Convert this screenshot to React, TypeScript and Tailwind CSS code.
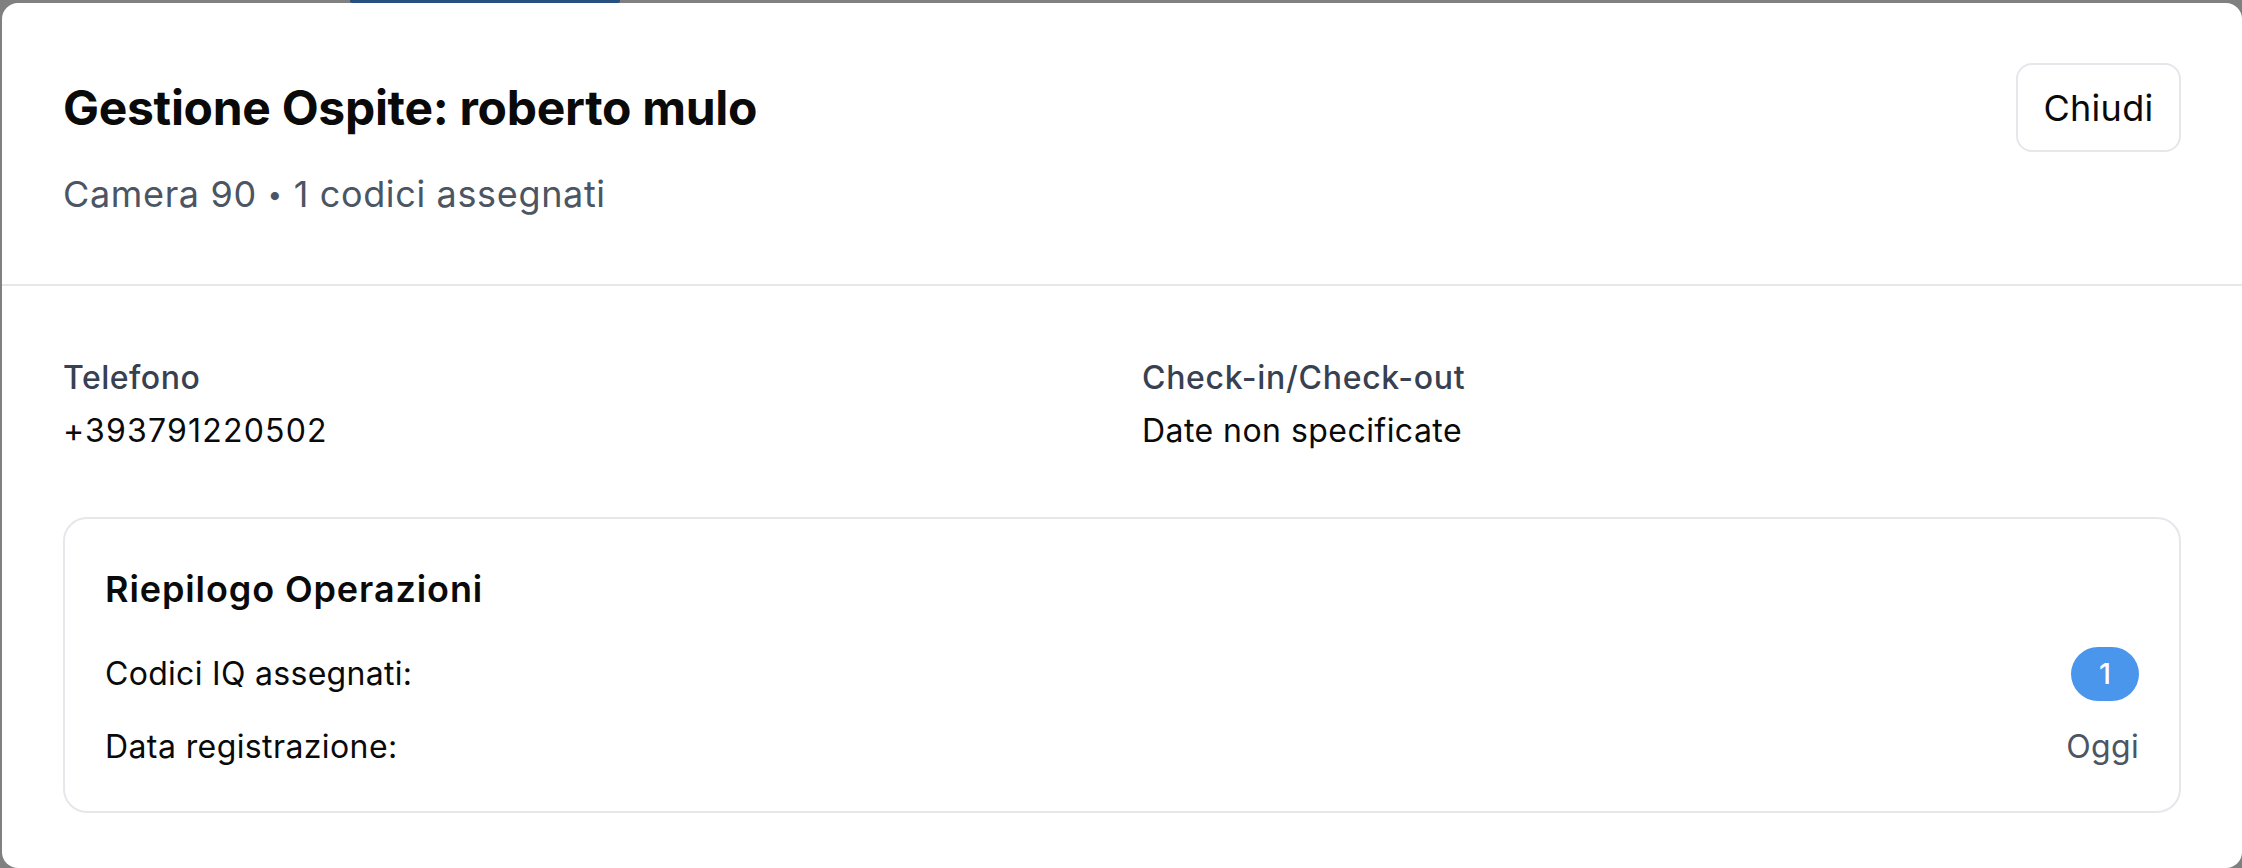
import React from "react";

export default function App() {
  return (
    <div
      className="relative w-[2242px] h-[868px] overflow-hidden bg-[#808080]"
      style={{ fontFamily: "Inter, 'Noto Sans', 'Liberation Sans', sans-serif" }}
    >
      {/* backdrop content peeking */}
      <div className="absolute left-[350px] top-0 h-[3px] w-[270px] rounded-b-[2px] bg-[#274f80]" />

      <div className="ml-[2px] mt-[3px] w-[2240px] h-[865px] rounded-[16px] bg-white flex flex-col">
        {/* Header */}
        <div className="flex items-start justify-between px-[61px] pt-[60px] pb-[61px] border-b-2 border-[#e5e7eb]">
          <div className="flex flex-col">
            <h2 className="text-[48px] leading-[90px] font-bold text-[#0a0a0a] tracking-[-0.3px]">
              Gestione Ospite: roberto mulo
            </h2>
            <p className="mt-[13px] text-[36px] leading-[56px] text-[#4b5563] tracking-[0.65px]">
              Camera 90 <span className="text-[26px] align-[3px]">•</span> 1 codici assegnati
            </p>
          </div>
          <button className="h-[89px] w-[165px] rounded-[16px] border-2 border-[#e5e7eb] bg-white text-[36px] font-normal text-[#0a0a0a] tracking-[0.3px] flex items-center justify-center">
            Chiudi
          </button>
        </div>

        {/* Body */}
        <div className="px-[61px] pt-[68px]">
          <div className="grid grid-cols-2 gap-x-[40px]">
            <div>
              <div className="text-[32px] leading-[48px] font-medium text-[#374151] tracking-[0.5px]">Telefono</div>
              <div className="mt-[5px] text-[32px] leading-[48px] text-[#0a0a0a] tracking-[1.2px]">+393791220502</div>
            </div>
            <div>
              <div className="text-[32px] leading-[48px] font-medium text-[#374151] tracking-[0.7px]">Check-in/Check-out</div>
              <div className="mt-[5px] text-[32px] leading-[48px] text-[#0a0a0a] tracking-[0.45px]">Date non specificate</div>
            </div>
          </div>

          <div className="mt-[62px] rounded-[24px] border-2 border-[#e5e7eb] px-[40px] pt-[42px] pb-[40px]">
            <h3 className="text-[36px] leading-[56px] font-semibold text-[#0a0a0a] tracking-[0.9px]">Riepilogo Operazioni</h3>
            <div className="mt-[30px] flex flex-col gap-[22px]">
              <div className="flex items-center justify-between h-[54px]">
                <span className="text-[32px] leading-[48px] text-[#0a0a0a] tracking-[0.3px]">Codici IQ assegnati:</span>
                <span className="h-[54px] w-[68px] rounded-full bg-[#4a96ec] text-white text-[29px] font-medium flex items-center justify-center">
                  1
                </span>
              </div>
              <div className="flex items-center justify-between h-[48px]">
                <span className="text-[32px] leading-[48px] text-[#0a0a0a] tracking-[0.4px]">Data registrazione:</span>
                <span className="text-[32px] leading-[48px] text-[#4b5563] tracking-[0.3px]">Oggi</span>
              </div>
            </div>
          </div>
        </div>
      </div>
    </div>
  );
}
